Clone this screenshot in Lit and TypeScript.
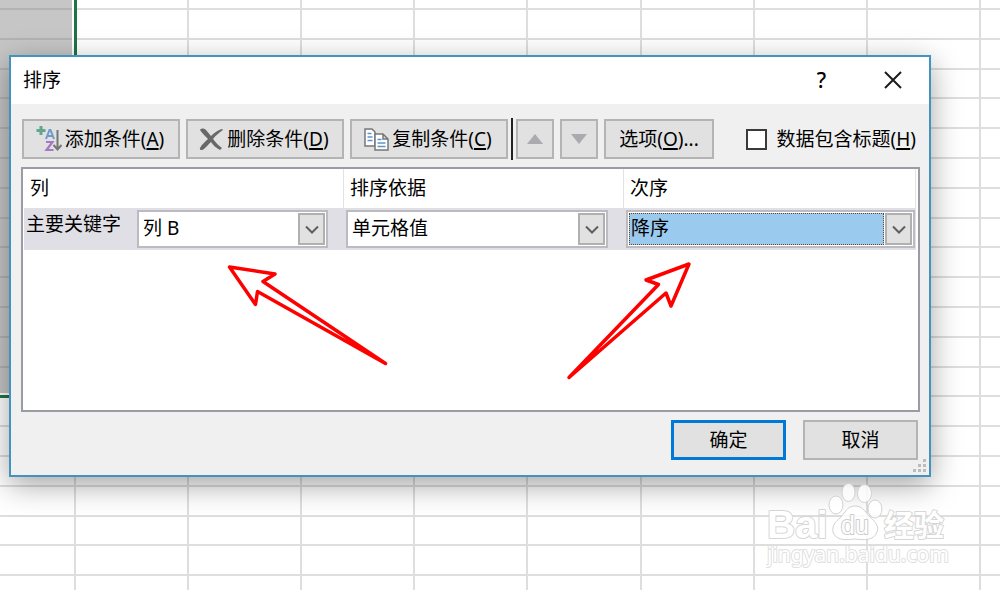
import { LitElement, html, svg, css } from "lit";
import { customElement, property } from "lit/decorators.js";
import { classMap } from "lit/directives/class-map.js";

const ROW_LINES = Array.from({ length: 40 }, (_, i) => 9 + Math.round((i * 298) / 10));
const COL_LINES = Array.from({ length: 20 }, (_, i) => 75 + Math.round((i * 1131) / 10));

@customElement("sheet-grid")
class SheetGrid extends LitElement {
  static styles = css`
    :host { display: block; overflow: hidden; background: #fff; }
    svg { display: block; width: 100%; height: 100%; }
    .line { stroke: #dedede; stroke-width: 2; }
    .dark { stroke: #b3b3b3; stroke-width: 2; }
    .picked { fill: #c6c6c6; }
    .gap { fill: #fff; }
    .edge { fill: #217346; }
  `;
  render() {
    return html`<svg aria-hidden="true">
      ${COL_LINES.map((x) => svg`<line class="line" x1=${x} x2=${x} y1="0" y2="100%"></line>`)}
      ${ROW_LINES.map((y) => svg`<line class="line" x1="0" x2="100%" y1=${y} y2=${y}></line>`)}
      <rect class="gap" width="75" height="395"></rect>
      <rect class="picked" width="72" height="393"></rect>
      ${ROW_LINES.filter((y) => y < 390).map((y) => svg`<line class="dark" x1="0" x2="72" y1=${y} y2=${y}></line>`)}
      <rect class="edge" x="74" width="3" height="398"></rect>
      <rect class="edge" y="395" width="77" height="3"></rect>
    </svg>`;
  }
}

@customElement("combo-box")
class ComboBox extends LitElement {
  @property() label = "";
  @property() value = "";
  @property({ type: Boolean }) active = false;

  static styles = css`
    :host { display: block; flex: 1; }
    .box {
      display: flex; gap: 1px; padding: 1px; height: 38px; box-sizing: border-box;
      border: 2px solid #bbbbc1; background: #fff;
    }
    select {
      appearance: none; flex: 1; min-width: 0; margin: 0; padding: 0 4px 2px 3px;
      border: 0; border-radius: 0; background: #fff; color: #000; outline: none;
      font: 19px/28px "Noto Sans", "Noto Sans CJK SC", sans-serif;
    }
    .active select { background: #9bcaef; border: 1px dotted #70431c; padding: 0 4px 2px 1px; }
    .arrow {
      display: flex; align-items: center; justify-content: center; width: 27px;
      box-sizing: border-box; border: 2px solid #b0b0b0; background: #e1e1e1;
    }
  `;
  render() {
    return html`<div class=${classMap({ box: true, active: this.active })}>
      <select aria-label=${this.label}><option>${this.value}</option></select>
      <span class="arrow">
        <svg width="14" height="9" viewBox="0 0 14 9" fill="none" stroke="#5e5e5e" stroke-width="2"><path d="M1 1.500l6 6 6-6" /></svg>
      </span>
    </div>`;
  }
}

@customElement("app-root")
class AppRoot extends LitElement {
  static styles = css`
    :host {
      display: block; position: relative; min-height: 100vh; box-sizing: border-box;
      padding: 55px 69px 0 9px; overflow: hidden; color: #000;
      font: 19px/28px "Noto Sans", "Noto Sans CJK SC", sans-serif;
    }
    sheet-grid { position: absolute; inset: 0; }
    .dialog {
      position: relative; border: 2px solid #4293c0; background: #f0f0f0;
      box-shadow: 0 8px 28px rgba(0, 0, 0, 0.36);
    }
    .title {
      display: flex; align-items: center; height: 47px; box-sizing: border-box;
      padding: 0 1px 2px 12px; background: #fff;
    }
    h1 { flex: 1; margin: 0; font: inherit; }
    button { font: inherit; color: inherit; border-radius: 0; padding: 0; margin: 0; }
    .caption {
      display: flex; align-items: center; justify-content: center; width: 71px; height: 44px;
      border: 0; background: none; font-size: 21px; font-weight: 500;
    }
    .body { padding: 14px 9px 15px 10px; }
    .toolbar { display: flex; align-items: center; gap: 3px; padding: 0 4px 0 1px; }
    .group { display: flex; gap: 6px; }
    .btn {
      display: flex; align-items: center; justify-content: center; height: 40px;
      box-sizing: border-box; border: 2px solid #b4b4b4; background: #e1e1e1; white-space: nowrap;
    }
    .wide { width: 158px; gap: 3px; padding-right: 2px; }
    .small { width: 38px; }
    .options { width: 110px; }
    .rule { width: 2px; height: 42px; background: #222; }
    u { text-decoration-thickness: 2px; text-underline-offset: 2px; }
    .check { display: flex; align-items: center; gap: 10px; margin-left: auto; white-space: nowrap; }
    .check input {
      appearance: none; width: 21px; height: 21px; margin: 0; border: 2px solid #3a3a3a; background: #fff;
    }
    .list {
      min-height: 245px; box-sizing: border-box; margin-top: 7px; padding: 0 2px 0 1px;
      border: 2px solid #999ca5; background: #fff;
    }
    table { width: 100%; table-layout: fixed; border-collapse: separate; border-spacing: 0; }
    th {
      height: 39px; box-sizing: border-box; padding: 0 6px 2px; text-align: left; font-weight: 400;
      border-right: 1px solid #e3e3e3;
    }
    .c1 { width: 320px; }
    .c2 { width: 280px; }
    td { height: 42px; padding: 0; background: #e0dfe5; vertical-align: top; }
    .cell { display: flex; padding: 2px 16px 2px 2px; }
    .last { padding-right: 1px; }
    .key { width: 111px; }
    .footer { display: flex; justify-content: flex-end; gap: 17px; margin-top: 8px; padding-right: 2px; }
    .foot { width: 115px; }
    .primary { border: 3px solid #0078d7; }
    .grip { position: absolute; right: 2px; bottom: 2px; }
    .marks, .brand { position: absolute; pointer-events: none; }
    .marks { left: 220px; top: 255px; }
    .brand { right: 50px; bottom: 18px; }
    .w { fill: #fff; stroke: #d6d6d6; stroke-width: 2; paint-order: stroke; stroke-linejoin: round; }
    .paw { fill: #fff; fill-opacity: 0.85; stroke: #d2d2d2; stroke-width: 1; }
    .logo { font: 700 39px "Liberation Sans", sans-serif; }
    .du { font: 400 25px "Liberation Sans", sans-serif; stroke: #cccccc; }
    .han { font: 700 30px "Noto Sans CJK SC", sans-serif; }
    .site { font: 400 21px "Noto Sans", sans-serif; stroke: #e0e0e0; }
  `;

  render() {
    return html`
      <sheet-grid></sheet-grid>
      <section class="dialog" role="dialog" aria-labelledby="t">
        <header class="title">
          <h1 id="t">排序</h1>
          <button class="caption">?</button>
          <button class="caption" aria-label="关闭">
            <svg width="18" height="18" viewBox="0 0 18 18" stroke="#1c1c1c" stroke-width="2"><path d="M1 1l16 16M17 1L1 17" /></svg>
          </button>
        </header>
        <div class="body">
          <div class="toolbar">
            <div class="group">
              <button class="btn wide">
                <svg width="26" height="28" viewBox="0 0 26 28" fill="none">
                  <path d="M5 1v9M.500 5.500h9" stroke="#62a68c" stroke-width="3" />
                  <path d="M10 14l3.500-9h1l3.500 9M11.300 11h5.400" stroke="#6c9ccb" stroke-width="2" />
                  <path d="M10 17h6.500l-6 8h7" stroke="#a678c5" stroke-width="2.200" />
                  <path d="M21.500 5v19M17.500 20l4 4.500 4-4.500" stroke="#757575" stroke-width="2" />
                </svg>
                <span>添加条件(<u>A</u>)</span>
              </button>
              <button class="btn wide">
                <svg width="25" height="25" viewBox="0 0 25 25" fill="#686868">
                  <path d="M1 3C2 1 5 1 7 3l5 6c3-3 7-6 11-7l1 1c-4 3-7 5-10 9 3 4 6 7 9 9l-2 2c-4-2-7-5-9-8-3 3-5 5-7 7-2 2-5 1-4-1 2-4 5-6 8-9C6 9 3 6 1 3z" />
                </svg>
                <span>删除条件(<u>D</u>)</span>
              </button>
              <button class="btn wide">
                <svg width="25" height="23" viewBox="0 0 25 23" fill="#fff" stroke="#777" stroke-width="1.500">
                  <path d="M1 1h7l3 3v14H1z" />
                  <path d="M3.500 5.500h4M3.500 9h5M3.500 12.500h5" stroke="#5b94cb" />
                  <path d="M11 6h8l5 5v11H11zM19 6v5h5" />
                  <path d="M13.500 11.500h4M13.500 15h8M13.500 18.500h8" stroke="#5b94cb" />
                </svg>
                <span>复制条件(<u>C</u>)</span>
              </button>
            </div>
            <span class="rule"></span>
            <div class="group">
              <button class="btn small" aria-label="上移"><svg width="16" height="10"><path d="M0 10L8 0l8 10z" fill="#aaaaaf" /></svg></button>
              <button class="btn small" aria-label="下移"><svg width="16" height="10"><path d="M0 0h16l-8 10z" fill="#aaaaaf" /></svg></button>
              <button class="btn options">选项(<u>O</u>)...</button>
            </div>
            <label class="check"><input type="checkbox" /><span>数据包含标题(<u>H</u>)</span></label>
          </div>
          <div class="list">
            <table>
              <colgroup><col class="c1" /><col class="c2" /><col /></colgroup>
              <thead><tr><th>列</th><th>排序依据</th><th>次序</th></tr></thead>
              <tbody>
                <tr>
                  <td><div class="cell"><span class="key">主要关键字</span><combo-box label="主要关键字" value="列 B"></combo-box></div></td>
                  <td><div class="cell"><combo-box label="排序依据" value="单元格值"></combo-box></div></td>
                  <td><div class="cell last"><combo-box label="次序" value="降序" active></combo-box></div></td>
                </tr>
              </tbody>
            </table>
          </div>
          <div class="footer">
            <button class="btn foot primary">确定</button>
            <button class="btn foot">取消</button>
          </div>
        </div>
        <svg class="grip" width="14" height="14" fill="#bcbcbc">
          <path d="M10 0h3v3h-3zM5 5h3v3H5zM10 5h3v3h-3zM0 10h3v3H0zM5 10h3v3H5zM10 10h3v3h-3z" />
        </svg>
      </section>
      <svg class="marks" width="480" height="130" viewBox="220 255 480 130" fill="none" stroke="#f00" stroke-width="3.500" stroke-linejoin="round" aria-hidden="true">
        <path d="M229.500 267l45.500 7-12 7.500L385.500 363.500 257.500 291.500l-2 13z" />
        <path d="M689 264l-43 16 12.500 4.500L569 377.500l97-84.500 5 13z" />
      </svg>
      <svg class="brand" width="184" height="92" viewBox="766 480 184 92">
        <text class="w logo" x="767" y="538">Bai</text>
        <g class="paw">
          <ellipse cx="836" cy="505" rx="7" ry="9" />
          <ellipse cx="848.500" cy="492.500" rx="6.500" ry="9" />
          <ellipse cx="864.500" cy="493.500" rx="7" ry="9" />
          <ellipse cx="875" cy="509" rx="7" ry="9" />
          <path d="M855 506c8 0 11 7 16 12 5 4 8 9 6 14-3 9-14 8-22 7-9 1-19 2-22-7-1-6 2-10 7-14 5-5 7-12 15-12z" />
        </g>
        <text class="w du" x="841" y="534">du</text>
        <text class="w han" x="884" y="536">经验</text>
        <text class="w site" x="767" y="562">jingyan.baidu.com</text>
      </svg>
    `;
  }
}
